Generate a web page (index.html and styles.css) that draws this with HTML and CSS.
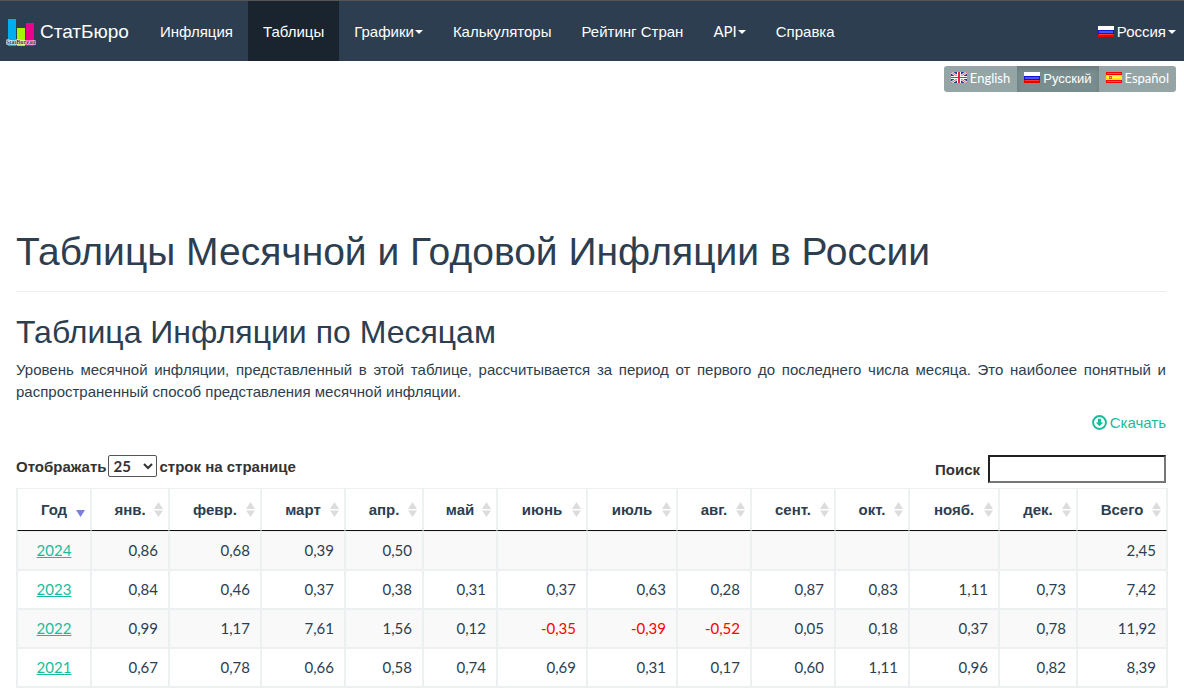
FILE: index.html
```html
<!DOCTYPE html>
<html lang="ru">
<head>
<meta charset="utf-8">
<meta name="viewport" content="width=device-width, initial-scale=1">
<title>Таблицы Месячной и Годовой Инфляции в России</title>
<link rel="stylesheet" href="styles.css">
</head>
<body>
<svg class="defs" width="0" height="0" aria-hidden="true">
  <symbol id="flag-ru" viewBox="0 0 16 11">
    <path fill="#fff" d="M0 0h16v4H0z"/><path fill="#0c16d8" d="M0 4h16v4H0z"/><path fill="#e80000" d="M0 8h16v3H0z"/>
    <path fill="#4a55f5" d="M1 5h14v2H1z"/><path fill="#ff3a35" d="M1 8h14v1H1z"/>
  </symbol>
  <symbol id="flag-gb" viewBox="0 0 16 11">
    <path fill="#29388c" d="M0 0h16v11H0z"/>
    <path stroke="#fff" stroke-width="2.4" d="M0 0l16 11M16 0L0 11"/>
    <path stroke="#e0586a" stroke-width="1" d="M0 0l16 11M16 0L0 11"/>
    <path fill="#fff" d="M6 0h4v11H6zM0 4h16v3H0z"/>
    <path fill="#e02840" d="M7 0h2v11H7zM0 5h16v1H0z"/>
  </symbol>
  <symbol id="flag-es" viewBox="0 0 16 11">
    <path fill="#f00" d="M0 0h16v11H0z"/><path fill="#ff5a50" d="M1 1h14v1H1zM1 9h14v1H1z"/>
    <path fill="#ffe600" d="M0 3h16v5H0z"/><path fill="#fff45a" d="M1 4h14v2H1z"/>
    <path fill="#d8602c" d="M3 4h3v3H3z"/><path fill="#f4c8a0" d="M4 5h1v1H4zM6 4h1v1H6z"/>
  </symbol>
  <symbol id="sort-both" viewBox="0 0 19 19">
    <path fill="#dcdcdc" d="M9.500 2L14 9H5zM5 10.500h9L9.500 17z"/>
  </symbol>
  <symbol id="sort-desc" viewBox="0 0 19 19">
    <path fill="#7c7fdc" d="M5 10h9L9.500 17z"/>
  </symbol>
</svg>

<nav class="navbar">
  <a class="brand" href="#">
    <svg class="logo" viewBox="0 0 30 28" aria-hidden="true">
      <path fill="#00adef" d="M2 0h8v27H2z"/><path fill="#a6f500" d="M11 9h8v18h-8z"/><path fill="#ec008c" d="M20 4h8v23h-8z"/>
      <text class="logo-text" x="0" y="25">StatBureau</text>
    </svg>
    <span>СтатБюро</span>
  </a>
  <ul class="menu">
    <li><a href="#">Инфляция</a></li>
    <li><a class="active" href="#">Таблицы</a></li>
    <li><a href="#">Графики<span class="caret"></span></a></li>
    <li><a href="#">Калькуляторы</a></li>
    <li><a href="#">Рейтинг Стран</a></li>
    <li><a href="#"><span class="latin">API</span><span class="caret"></span></a></li>
    <li><a href="#">Справка</a></li>
  </ul>
  <a class="country" href="#"><svg class="flag" aria-hidden="true"><use href="#flag-ru"/></svg>Россия<span class="caret"></span></a>
</nav>

<div class="languages">
  <div class="btn-group">
    <button type="button" class="latin"><svg class="flag" aria-hidden="true"><use href="#flag-gb"/></svg>English</button>
    <button type="button" class="active"><svg class="flag" aria-hidden="true"><use href="#flag-ru"/></svg>Русский</button>
    <button type="button" class="latin"><svg class="flag" aria-hidden="true"><use href="#flag-es"/></svg>Español</button>
  </div>
</div>

<main>
  <h1>Таблицы Месячной и Годовой Инфляции в России</h1>
  <h2>Таблица Инфляции по Месяцам</h2>
  <p class="intro">Уровень месячной инфляции, представленный в этой таблице, рассчитывается за период от первого до последнего числа месяца. Это наиболее понятный и распространенный способ представления месячной инфляции.</p>
  <div class="download">
    <a href="#"><svg viewBox="0 0 14 14" aria-hidden="true"><circle cx="7" cy="7" r="6" fill="none" stroke="currentColor" stroke-width="1.800"/><path fill="currentColor" d="M5.500 3.500h3V7h2L7 10.500 3.500 7h2z"/></svg>Скачать</a>
  </div>
  <div class="controls">
    <label class="length">Отображать <select class="latin"><option>10</option><option selected>25</option><option>50</option><option>100</option></select> строк на странице</label>
    <label class="search">Поиск <input type="search"></label>
  </div>
  <table>
    <colgroup>
      <col class="w-s"><col class="w-m"><col class="w-xxl"><col class="w-l"><col class="w-m"><col class="w-s"><col class="w-xl"><col class="w-xl"><col class="w-s"><col class="w-l"><col class="w-s"><col class="w-xl"><col class="w-m"><col>
    </colgroup>
    <thead>
      <tr>
        <th scope="col"><button type="button"><span>Год</span><svg><use href="#sort-desc"/></svg></button></th>
        <th scope="col"><button type="button"><span>янв.</span><svg><use href="#sort-both"/></svg></button></th>
        <th scope="col"><button type="button"><span>февр.</span><svg><use href="#sort-both"/></svg></button></th>
        <th scope="col"><button type="button"><span>март</span><svg><use href="#sort-both"/></svg></button></th>
        <th scope="col"><button type="button"><span>апр.</span><svg><use href="#sort-both"/></svg></button></th>
        <th scope="col"><button type="button"><span>май</span><svg><use href="#sort-both"/></svg></button></th>
        <th scope="col"><button type="button"><span>июнь</span><svg><use href="#sort-both"/></svg></button></th>
        <th scope="col"><button type="button"><span>июль</span><svg><use href="#sort-both"/></svg></button></th>
        <th scope="col"><button type="button"><span>авг.</span><svg><use href="#sort-both"/></svg></button></th>
        <th scope="col"><button type="button"><span>сент.</span><svg><use href="#sort-both"/></svg></button></th>
        <th scope="col"><button type="button"><span>окт.</span><svg><use href="#sort-both"/></svg></button></th>
        <th scope="col"><button type="button"><span>нояб.</span><svg><use href="#sort-both"/></svg></button></th>
        <th scope="col"><button type="button"><span>дек.</span><svg><use href="#sort-both"/></svg></button></th>
        <th scope="col"><button type="button"><span>Всего</span><svg><use href="#sort-both"/></svg></button></th>
      </tr>
    </thead>
    <tbody>
      <tr><td><a href="#">2024</a></td><td>0,86</td><td>0,68</td><td>0,39</td><td>0,50</td><td></td><td></td><td></td><td></td><td></td><td></td><td></td><td></td><td>2,45</td></tr>
      <tr><td><a href="#">2023</a></td><td>0,84</td><td>0,46</td><td>0,37</td><td>0,38</td><td>0,31</td><td>0,37</td><td>0,63</td><td>0,28</td><td>0,87</td><td>0,83</td><td>1,11</td><td>0,73</td><td>7,42</td></tr>
      <tr><td><a href="#">2022</a></td><td>0,99</td><td>1,17</td><td>7,61</td><td>1,56</td><td>0,12</td><td class="negative">-0,35</td><td class="negative">-0,39</td><td class="negative">-0,52</td><td>0,05</td><td>0,18</td><td>0,37</td><td>0,78</td><td>11,92</td></tr>
      <tr><td><a href="#">2021</a></td><td>0,67</td><td>0,78</td><td>0,66</td><td>0,58</td><td>0,74</td><td>0,69</td><td>0,31</td><td>0,17</td><td>0,60</td><td>1,11</td><td>0,96</td><td>0,82</td><td>8,39</td></tr>
    </tbody>
  </table>
</main>
</body>
</html>
```
FILE: styles.css
```css
* { box-sizing: border-box; }
body {
  margin: 0;
  font: 15px/21px "Liberation Sans", Arial, sans-serif;
  color: #2c3e50;
  background: #fff;
}
a { color: #18bc9c; }
button, select, input { font: inherit; color: inherit; }
.latin, td { font-family: Lato, "Liberation Sans", sans-serif; }
.defs { position: absolute; }

.navbar {
  display: flex;
  align-items: stretch;
  min-height: 61px;
  border-top: 1px solid #555;
  background: #2c3e50;
}
.navbar a { display: flex; align-items: center; color: #fff; text-decoration: none; }
.brand { gap: 4px; padding: 0 16px 0 6px; font-size: 19px; }
.logo { width: 30px; height: 28px; margin-top: 4px; }
.logo-text { font: bold 6px "Liberation Serif", serif; fill: #24304a; stroke: #fff; stroke-width: 1px; paint-order: stroke; }
.menu { display: flex; margin: 0; padding: 0; list-style: none; }
.menu a { height: 100%; padding: 0 15px; }
.menu .active { background: #1a242f; }
.caret { margin: 2px 0 0 1px; border: 4px solid transparent; border-top-color: currentColor; border-bottom: 0; }
.country { margin-left: auto; padding-right: 8px; }
.country .caret { margin-left: 2px; }
.flag { width: 16px; height: 11px; margin-right: 3px; }
.country .flag { margin-top: 1px; }

.languages { display: flex; justify-content: flex-end; padding: 5px 8px 0; }
.btn-group { display: flex; border-radius: 3px; overflow: hidden; }
.btn-group button {
  display: flex;
  align-items: center;
  padding: 2px 7px 3px;
  border: 0;
  background: #95a5a6;
  color: #fff;
  font-size: 13px;
}
.btn-group .flag { margin-bottom: 2px; }
.btn-group .active { background: #798d8f; box-shadow: inset 0 3px 5px rgba(0, 0, 0, 0.125); }

main { padding: 136px 18px 0 16px; }
h1, h2 { font-weight: 400; margin: 0; }
h1 { padding-bottom: 15px; border-bottom: 1px solid #eee; font-size: 39px; line-height: 48px; }
h2 { margin: 22px 0 8px; font-size: 32px; line-height: 37px; }
.intro { margin: 0 0 9px; line-height: 22px; text-align: justify; }
.download { display: flex; justify-content: flex-end; }
.download a { display: flex; align-items: center; gap: 3px; text-decoration: none; }
.download svg { width: 15px; height: 15px; }

.controls { display: flex; justify-content: space-between; align-items: flex-start; margin-top: 22px; font-weight: 700; color: #333; }
.length { display: flex; align-items: center; gap: 2px; }
.length select { height: 22px; padding: 0; border: 1px solid #555; border-radius: 2px; background: #fff; width: 49px; }
.search { display: flex; align-items: center; gap: 8px; }
.search input { width: 178px; height: 28px; border: 2px inset #767676; background: #fff; }

table {
  box-sizing: content-box;
  width: 100%;
  margin: 5px 0 0;
  border: 1px solid #ecf0f1;
  border-collapse: separate;
  border-spacing: 0;
  table-layout: fixed;
}
.w-s { width: 74px; }
.w-m { width: 78px; }
.w-l { width: 84px; }
.w-xl { width: 90px; }
.w-xxl { width: 92px; }
th, td { border: 1px solid #ecf0f1; }
th { padding: 10px 0; border-top: 0; border-bottom-color: #111; }
th button { display: grid; grid-template-columns: 19px 1fr 19px; align-items: center; width: 100%; padding: 0; border: 0; background: none; }
th span { grid-column: 2; }
th svg { width: 19px; height: 19px; }
td { padding: 8px 10px; text-align: right; }
td:first-child { text-align: center; }
tbody tr:nth-child(odd) { background: #f9f9f9; }
.negative { color: red; }
```
